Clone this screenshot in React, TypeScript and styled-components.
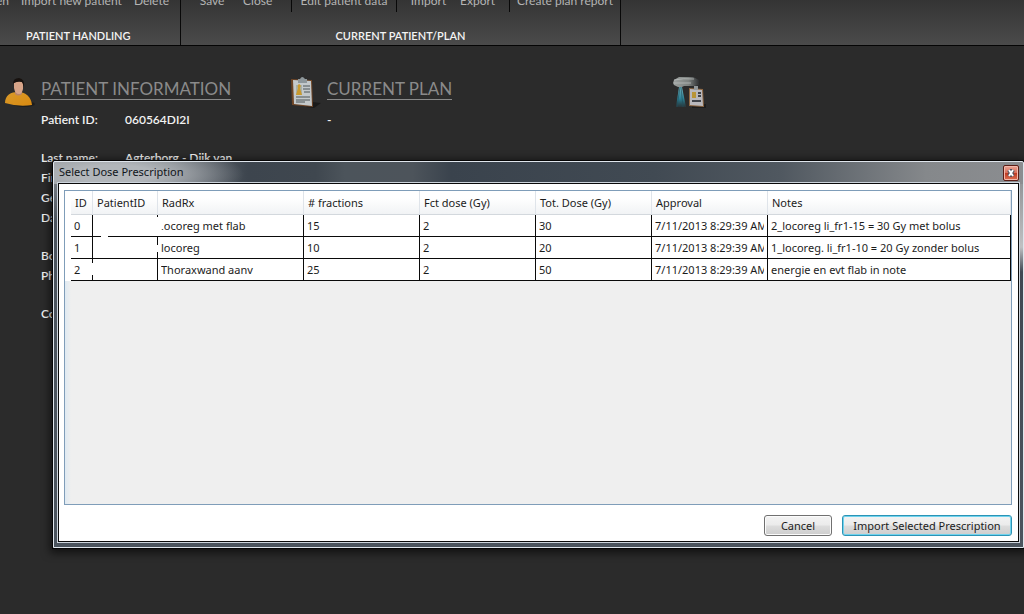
import React from "react";
import styled, { createGlobalStyle } from "styled-components";

const UI = `"Noto Sans", "Open Sans", sans-serif`;
const APP = `Lato, "Open Sans", sans-serif`;

const Global = createGlobalStyle`
  *, *::before, *::after { box-sizing: border-box; }
  body { margin: 0; background: #2b2b2b; font-family: ${APP}; color: #f2f2f2; overflow: hidden; }
  button { font: inherit; color: inherit; background: none; border: 0; padding: 0; white-space: nowrap; }
  h2, h3, dl, dd, dt, p { margin: 0; font-weight: 400; }
`;

const Page = styled.main`
  min-height: 100vh;
  background: #2b2b2b;
`;

const Ribbon = styled.header`
  display: flex;
  height: 46px;
  overflow: hidden;
  background: linear-gradient(#343434, #4b4b4b);
  border-bottom: 1px solid #050505;
`;

const Group = styled.section<{ $width: number }>`
  flex: 0 0 ${(p) => p.$width}px;
  min-width: 0;
  display: flex;
  flex-direction: column;
  justify-content: space-between;
  border-right: 1px solid #080808;
`;

const Commands = styled.div<{ $end?: boolean }>`
  display: flex;
  justify-content: ${(p) => (p.$end ? "flex-end" : "flex-start")};
  height: 12px;
  overflow: hidden;
  padding-right: ${(p) => (p.$end ? 11 : 0)}px;
  gap: ${(p) => (p.$end ? 12 : 0)}px;
`;

const CommandSet = styled.div<{ $width: number; $last?: boolean }>`
  display: flex;
  justify-content: space-evenly;
  width: ${(p) => p.$width}px;
  border-right: ${(p) => (p.$last ? "0" : "1px solid #080808")};
`;

const Command = styled.button`
  align-self: flex-end;
  flex: none;
  margin-bottom: 3px;
  font-size: 12px;
  line-height: 16px;
  color: #b4b4b4;
`;

const GroupName = styled.h3<{ $end?: boolean }>`
  padding: 0 0 1px;
  padding-left: ${(p) => (p.$end ? 0 : 26)}px;
  text-align: ${(p) => (p.$end ? "center" : "left")};
  font-size: 11px;
  font-weight: 600;
  line-height: 17px;
  color: #f4f4f4;
`;

const Columns = styled.div`
  display: flex;
  padding: 30px 0 0 4px;
`;

const Column = styled.section<{ $width: number }>`
  display: grid;
  grid-template-columns: 37px 1fr;
  flex: 0 0 ${(p) => p.$width}px;
  align-content: start;
`;

const Heading = styled.h2`
  justify-self: start;
  height: 24px;
  border-bottom: 1px solid #8a8a8a;
  font-size: 17px;
  line-height: 26px;
  color: #8a8a8a;
  white-space: nowrap;
`;

const Details = styled.div`
  grid-column: 2;
  display: flex;
  flex-direction: column;
  gap: 18px;
  font-size: 12px;
  font-weight: 600;
  line-height: 20px;
`;

const DetailRow = styled.div`
  display: grid;
  grid-template-columns: 84px 1fr;
  white-space: nowrap;
  dt, dd { font-weight: 600; }
`;

const Dialog = styled.div`
  position: absolute;
  top: 161px;
  left: 53px;
  right: 0;
  padding: 0 4px 5px;
  border: 1px solid #dfe5ec;
  border-radius: 2px 2px 0 0;
  background:
    radial-gradient(ellipse 130px 30px at 60px 12px, #b2b6ba 30%, #b2b6ba00 100%) 0 0 / 300px 22px no-repeat,
    linear-gradient(90deg, #8b9096, #6f757c 12%, #3d454e 20%, #3f474f 27%, #4c545b 30%, #4d545b 37%, #3a434d 41%, #414a53 62%, #505860 75%, #85888b 90%, #8b8d90) 0 0 / 100% 22px no-repeat,
    linear-gradient(#85888b, #bfc0c2 85px, #3f4852 110px, #4b545e) 100% 0 / 5px 100% no-repeat,
    linear-gradient(#8b9096, #4b545e 60px);
  box-shadow: 0 0 0 1px #050505, 0 2px 8px 3px #0009;
  color: #1c1c1c;
  font-family: ${UI};
  font-size: 11px;
`;

const TitleBar = styled.div`
  display: flex;
  justify-content: space-between;
  align-items: center;
  height: 21px;
  padding: 0 0 0 1px;
`;

const Title = styled.h2`
  align-self: flex-start;
  font-size: 11px;
  line-height: 20px;
  color: #10151a;
`;

const CloseButton = styled.button`
  display: flex;
  align-items: center;
  justify-content: center;
  width: 16px;
  height: 16px;
  border: 1px solid #5b1e16;
  border-radius: 2px;
  background: linear-gradient(#eba596, #d9705c 48%, #c03a22 52%, #dc7052);
  box-shadow: inset 0 0 0 1px #f3b8ab;
`;

const Body = styled.div`
  padding: 6px 6px 5px 5px;
  border: 1px solid #0a0a0a;
  outline: 1px solid #cdd4dc;
  background: #fff;
`;

const GridFrame = styled.div`
  min-height: 315px;
  padding-left: 6px;
  border: 1px solid #7f9db9;
  background: linear-gradient(90deg, #dfeaf2, #efefef 6px);
`;

const Table = styled.table`
  width: 100%;
  table-layout: fixed;
  border-collapse: separate;
  border-spacing: 0;
  background: #fff;
  box-shadow: -6px 0 0 #fff;
  white-space: nowrap;
`;

const Th = styled.th`
  height: 24px;
  padding: 0 0 0 4px;
  border-right: 1px solid #dfe4ea;
  border-bottom: 1px solid #d3d8dd;
  background: linear-gradient(#ffffff 30%, #f1f3f5);
  font-weight: 400;
  text-align: left;
`;

const Td = styled.td`
  position: relative;
  height: 22px;
  padding: 0 3px;
  border-right: 1px solid #0a0a0a;
  border-bottom: 1px solid #0a0a0a;
`;

const Clip = styled.div`
  overflow: hidden;
  line-height: 20px;
`;

const Redaction = styled.span<{ $x: number; $y: number; $w: number; $h: number }>`
  position: absolute;
  z-index: 1;
  left: ${(p) => p.$x}px;
  top: ${(p) => p.$y}px;
  width: ${(p) => p.$w}px;
  height: ${(p) => p.$h}px;
  background: #fff;
`;

const Actions = styled.div`
  display: flex;
  justify-content: flex-end;
  gap: 10px;
  padding-top: 10px;
`;

const Button = styled.button<{ $primary?: boolean }>`
  height: 21px;
  padding: 0 10px;
  min-width: ${(p) => (p.$primary ? 170 : 68)}px;
  border: 1px solid ${(p) => (p.$primary ? "#2c93b5" : "#707070")};
  border-radius: 3px;
  background: linear-gradient(#f3f3f3, #ebebeb 48%, #dddddd 52%, #cdcdcd);
  box-shadow: inset 0 0 0 1px ${(p) => (p.$primary ? "#6fd3ee" : "#fbfbfb")};
  font-size: 11px;
  line-height: 19px;
`;

const PersonIcon = () => (
  <svg width="32" height="34" viewBox="0 0 32 34" aria-hidden="true">
    <defs>
      <linearGradient id="shirt" x1="0" x2="1" y1="0" y2="1">
        <stop offset="0" stopColor="#d99a2b" />
        <stop offset="1" stopColor="#d98a10" />
      </linearGradient>
    </defs>
    <ellipse cx="20" cy="28" rx="11" ry="3" fill="#1d1d1d" />
    <path d="M1 27C1 19 7 16 14 16s13 4 14 13Q14 31 1 27Z" fill="url(#shirt)" />
    <path d="M11 14v4q3 3 7 0v-4Z" fill="#b98468" />
    <path d="M10 7q5-4 9 0v6q-1 5-4 5-4 0-5-6Z" fill="#d7a488" />
    <path d="M9 8q0-6 6-6 6 1 5 9l-2-5q-4-1-8 1Z" fill="#17110e" />
  </svg>
);

const ClipboardIcon = () => (
  <svg width="32" height="34" viewBox="0 0 32 34" aria-hidden="true">
    <path d="M22 26l9 1-7 5-8-1Z" fill="#1a1a1a" />
    <path d="M1 3l21 1 1 27-21-2Z" fill="#6e4526" />
    <path d="M3 4l18 1 1 25-18-2Z" fill="#c4c9cb" />
    <path d="M8 3h2q2-4 5 0h2v4H8Z" fill="#8e979b" />
    <path d="M6 9h6v10H6Z" fill="#a9b0a8" />
    <path d="M9 8q3 1 1 4l2 7H6l2-7q-1-3 1-4Z" fill="#c99a2e" />
    <path d="M13 10h7M13 13h7M14 16h6M6 21h14M6 24h14M6 26h9" stroke="#4d5457" />
  </svg>
);

const BeamIcon = () => (
  <svg width="36" height="34" viewBox="0 0 36 34" aria-hidden="true">
    <defs>
      <linearGradient id="beam" x1="0" x2="0" y1="0" y2="1">
        <stop offset="0" stopColor="#6fb4c0" />
        <stop offset="0.6" stopColor="#2b7f93" />
        <stop offset="1" stopColor="#246476" stopOpacity="0.2" />
      </linearGradient>
      <linearGradient id="arm">
        <stop offset="0" stopColor="#9da2a0" />
        <stop offset="0.6" stopColor="#7c817f" />
        <stop offset="1" stopColor="#2e3033" />
      </linearGradient>
    </defs>
    <path d="M20 29l14-1v4H20Z" fill="#1c1c1c" />
    <path d="M7 11h3l4 20H4Z" fill="url(#beam)" />
    <path d="M8 11L5 31M9 11l2 20" stroke="#1f4d5a" strokeOpacity="0.6" />
    <path d="M2 4L7 1h14l6 3v5l-5 1H12l-2 1H6L2 9 1 7Z" fill="url(#arm)" />
    <path d="M2 4q9-2 20-1M2 7h17" fill="none" stroke="#b9bdbb" strokeOpacity="0.8" />
    <path d="M17 12l14 1 1 18-15-1Z" fill="#8d6743" />
    <path d="M18 13l12 1 1 16-13-1Z" fill="#b9b8bc" />
    <path d="M22 10h4v4h-4Z" fill="#92989b" />
    <path d="M20 16h4v6h-4Z" fill="#b99536" />
    <path d="M26 17h3M26 20h3M20 25h9" stroke="#40434a" strokeWidth="2" />
  </svg>
);

const rows = [
  ["0", "", "locoreg met flab", "15", "2", "30", "7/11/2013 8:29:39 AM", "2_locoreg li_fr1-15 = 30 Gy met bolus"],
  ["1", "", "locoreg", "10", "2", "20", "7/11/2013 8:29:39 AM", "1_locoreg. li_fr1-10 = 20 Gy zonder bolus"],
  ["2", "", "Thoraxwand aanv", "25", "2", "50", "7/11/2013 8:29:39 AM", "energie en evt flab in note"],
];
const heads = ["ID", "PatientID", "RadRx", "# fractions", "Fct dose (Gy)", "Tot. Dose (Gy)", "Approval", "Notes"];
const widths = [22, 65, 146, 116, 116, 116, 116];

// Blanked-out patches over the patient IDs, per row: x, y, width, height.
const redactions: [number, number, number, number][][] = [
  [[8, 21, 7, 1], [60, 2, 11, 12], [60, 13, 6, 8]],
  [[60, 8, 6, 7]],
  [[-1, 4, 5, 12]],
];

const details = [
  [["Patient ID:", "060564DI2I"]],
  [["Last name:", "Agterborg - Dijk van"], ["First name:", ""], ["Gender:", ""], ["Date of birth:", ""]],
  [["Body:", ""], ["Phone:", ""]],
  [["Comments:", ""]],
];

export default function App() {
  return (
    <Page>
      <Global />
      <Ribbon>
        <Group $width={181}>
          <Commands $end>
            <Command>Open</Command>
            <Command>Import new patient</Command>
            <Command>Delete</Command>
          </Commands>
          <GroupName>PATIENT HANDLING</GroupName>
        </Group>
        <Group $width={440}>
          <Commands>
            <CommandSet $width={111}><Command>Save</Command><Command>Close</Command></CommandSet>
            <CommandSet $width={105}><Command>Edit patient data</Command></CommandSet>
            <CommandSet $width={113}><Command>Import</Command><Command>Export</Command></CommandSet>
            <CommandSet $width={110} $last><Command>Create plan report</Command></CommandSet>
          </Commands>
          <GroupName $end>CURRENT PATIENT/PLAN</GroupName>
        </Group>
      </Ribbon>

      <Columns>
        <Column $width={286}>
          <PersonIcon />
          <Heading>PATIENT INFORMATION</Heading>
          <Details>
            {details.map((group, i) => (
              <dl key={i}>
                {group.map(([label, value]) => (
                  <DetailRow key={label}><dt>{label}</dt><dd>{value}</dd></DetailRow>
                ))}
              </dl>
            ))}
          </Details>
        </Column>
        <Column $width={382}>
          <ClipboardIcon />
          <Heading>CURRENT PLAN</Heading>
          <Details>-</Details>
        </Column>
        <BeamIcon />
      </Columns>

      <Dialog role="dialog" aria-labelledby="dialog-title">
        <TitleBar>
          <Title id="dialog-title">Select Dose Prescription</Title>
          <CloseButton aria-label="Close dialog">
            <svg width="8" height="8" viewBox="0 0 8 8" aria-hidden="true">
              <path d="M2 1l4 6M6 1l-4 6" stroke="#4a4f5c" strokeWidth="4" />
              <path d="M2 1l4 6M6 1l-4 6" stroke="#fff" strokeWidth="2" />
            </svg>
          </CloseButton>
        </TitleBar>
        <Body>
          <GridFrame>
            <Table>
              <colgroup>
                {widths.map((w, i) => <col key={i} width={w} />)}
                <col />
              </colgroup>
              <thead>
                <tr>{heads.map((h) => <Th key={h} scope="col">{h}</Th>)}</tr>
              </thead>
              <tbody>
                {rows.map((row, r) => (
                  <tr key={r}>
                    {row.map((cell, c) => (
                      <Td key={c}>
                        <Clip>{cell}</Clip>
                        {c === 1 && redactions[r].map(([x, y, w, h], k) => (
                          <Redaction key={k} $x={x} $y={y} $w={w} $h={h} />
                        ))}
                      </Td>
                    ))}
                  </tr>
                ))}
              </tbody>
            </Table>
          </GridFrame>
          <Actions>
            <Button>Cancel</Button>
            <Button $primary>Import Selected Prescription</Button>
          </Actions>
        </Body>
      </Dialog>
    </Page>
  );
}
